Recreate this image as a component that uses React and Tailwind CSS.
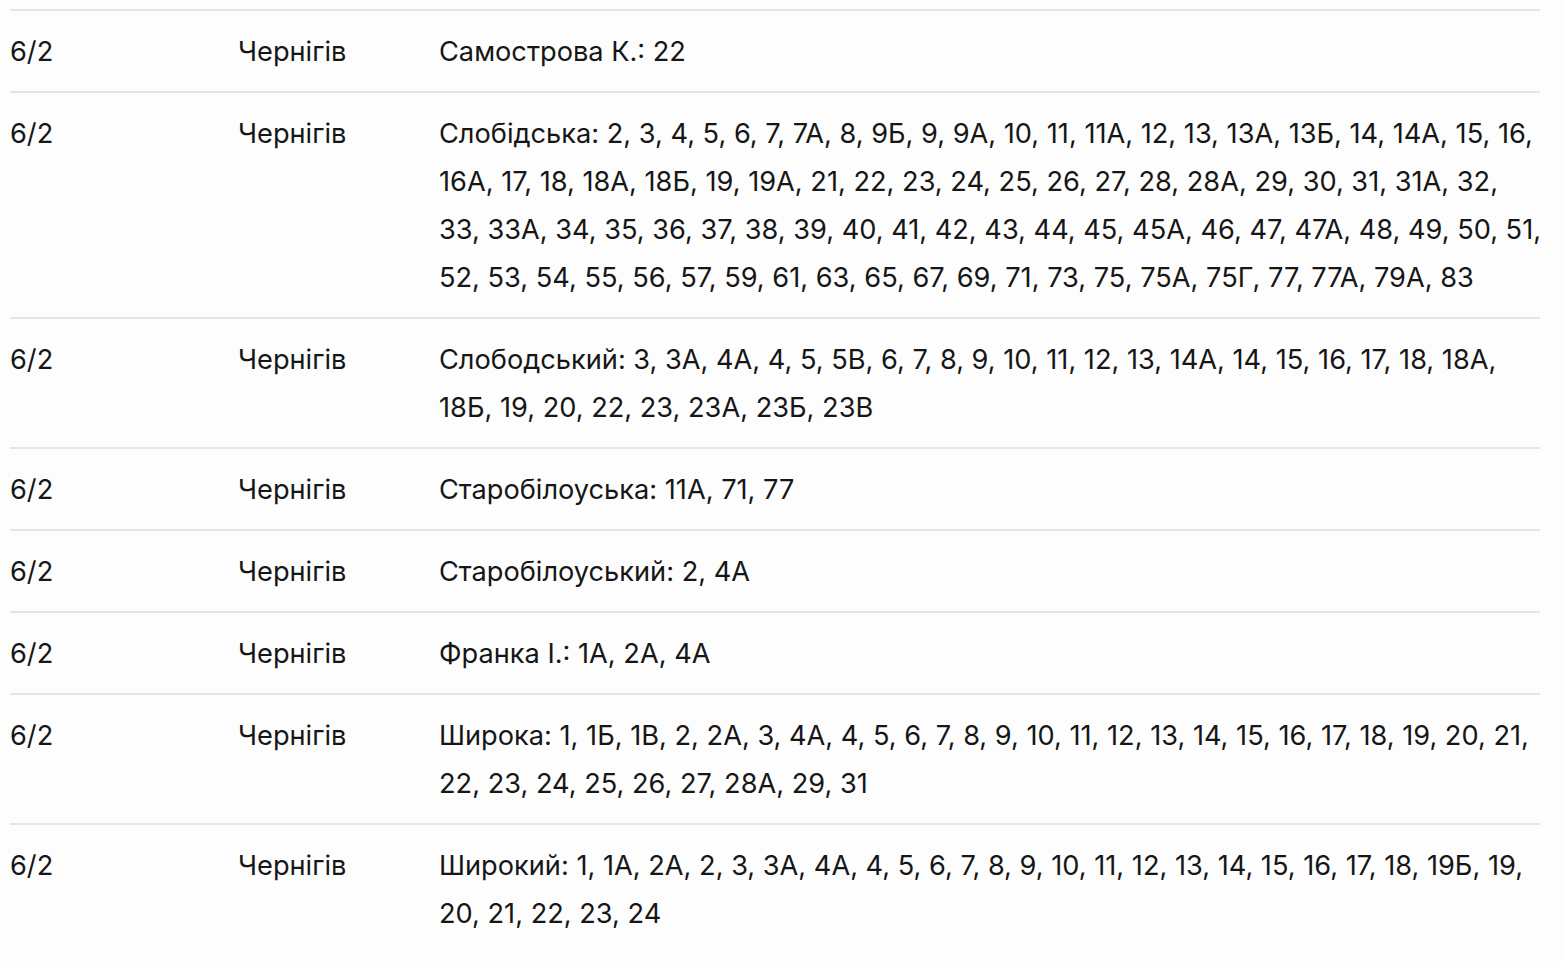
import React from "react";

const rows = [
  ["6/2", "Чернігів", ["Самострова К.: 22"]],
  ["6/2", "Чернігів", [
    "Слобідська: 2, 3, 4, 5, 6, 7, 7А, 8, 9Б, 9, 9А, 10, 11, 11А, 12, 13, 13А, 13Б, 14, 14А, 15, 16,",
    "16А, 17, 18, 18А, 18Б, 19, 19А, 21, 22, 23, 24, 25, 26, 27, 28, 28А, 29, 30, 31, 31А, 32,",
    "33, 33А, 34, 35, 36, 37, 38, 39, 40, 41, 42, 43, 44, 45, 45А, 46, 47, 47А, 48, 49, 50, 51,",
    "52, 53, 54, 55, 56, 57, 59, 61, 63, 65, 67, 69, 71, 73, 75, 75А, 75Г, 77, 77А, 79А, 83",
  ]],
  ["6/2", "Чернігів", [
    "Слободський: 3, 3А, 4А, 4, 5, 5В, 6, 7, 8, 9, 10, 11, 12, 13, 14А, 14, 15, 16, 17, 18, 18А,",
    "18Б, 19, 20, 22, 23, 23А, 23Б, 23В",
  ]],
  ["6/2", "Чернігів", ["Старобілоуська: 11А, 71, 77"]],
  ["6/2", "Чернігів", ["Старобілоуський: 2, 4А"]],
  ["6/2", "Чернігів", ["Франка І.: 1А, 2А, 4А"]],
  ["6/2", "Чернігів", [
    "Широка: 1, 1Б, 1В, 2, 2А, 3, 4А, 4, 5, 6, 7, 8, 9, 10, 11, 12, 13, 14, 15, 16, 17, 18, 19, 20, 21,",
    "22, 23, 24, 25, 26, 27, 28А, 29, 31",
  ]],
  ["6/2", "Чернігів", [
    "Широкий: 1, 1А, 2А, 2, 3, 3А, 4А, 4, 5, 6, 7, 8, 9, 10, 11, 12, 13, 14, 15, 16, 17, 18, 19Б, 19,",
    "20, 21, 22, 23, 24",
  ]],
];

export default function App() {
  return (
    <div
      className="w-[1564px] h-[962px] overflow-hidden bg-[#fdfdfd] text-[#161616]"
      style={{ fontFamily: "Inter, 'Noto Sans', sans-serif" }}
    >
      <div className="ml-[10px] mr-[24px] pt-[9px]">
        {rows.map((r, i) => (
          <div
            key={i}
            className="flex border-t-2 border-[#e5e5e5] pt-[17px] pb-[15px] text-[27.2px] leading-[48px]"
          >
            <div className="w-[228px] shrink-0">{r[0]}</div>
            <div className="w-[201px] shrink-0">{r[1]}</div>
            <div className="flex-1 min-w-0">
              {r[2].map((line, j) => (
                <div key={j} className="whitespace-nowrap">{line}</div>
              ))}
            </div>
          </div>
        ))}
      </div>
    </div>
  );
}
